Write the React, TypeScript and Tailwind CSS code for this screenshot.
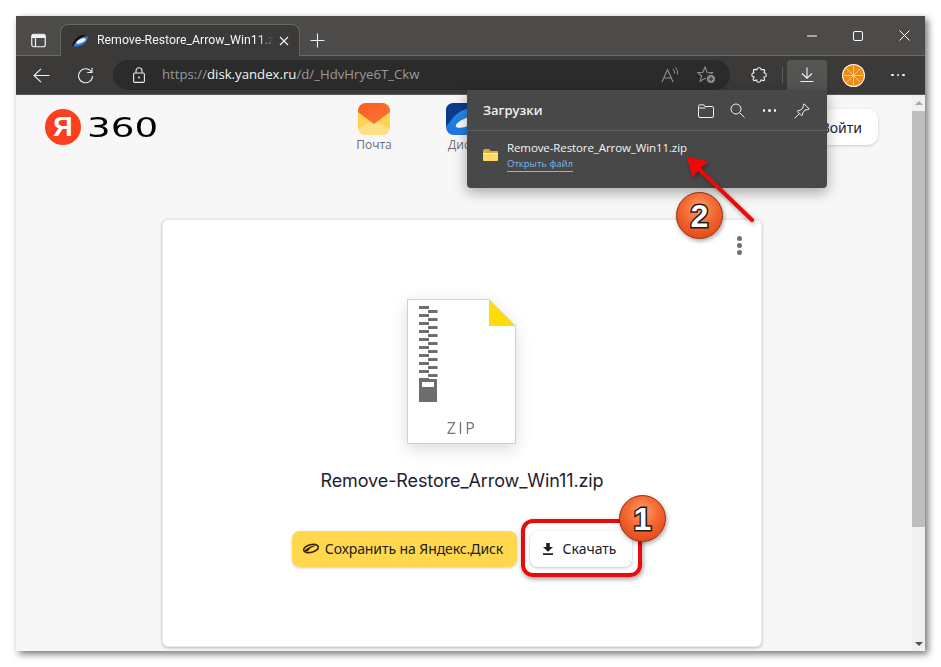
import React from "react";

const Ico = ({ w = 16, h = 16, vb, children, className = "" }: { w?: number; h?: number; vb?: string; children: React.ReactNode; className?: string }) => (
  <svg width={w} height={h} viewBox={vb ?? `0 0 ${w} ${h}`} fill="none" stroke="currentColor" strokeWidth={1} className={className}>
    {children}
  </svg>
);

const DiskLogo = ({ size }: { size: number }) => (
  <svg width={size} height={size} viewBox="0 0 32 32">
    <defs>
      <linearGradient id="dg" x1="0" y1="1" x2="1" y2="0">
        <stop offset="0" stopColor="#1a6fe0" />
        <stop offset="1" stopColor="#2f9bf0" />
      </linearGradient>
    </defs>
    <rect width="32" height="32" rx="8" fill="url(#dg)" />
    <path d="M0 8 Q0 0 8 0 H24 Q30 0 32 5 Q14 3 3 20 Q0 24 0 22Z" fill="#0b3c8c" />
    <ellipse cx="21" cy="19" rx="12" ry="4" transform="rotate(-22 21 19)" fill="#fff" />
  </svg>
);

const TabLogo = () => (
  <svg width="16" height="12" viewBox="0 0 16 12">
    <path d="M0 11 Q2 3 10 0 L14 0.5 Q6 2.5 3 10Z" fill="#0d0d12" />
    <path d="M1.5 11.5 Q3 6 9 3 Q14 1 16 1.5 Q15.5 7 10 10 Q5 12 1.5 11.5Z" fill="#2a80ea" />
    <ellipse cx="9" cy="6" rx="5" ry="1.9" transform="rotate(-25 9 6)" fill="#eef5ff" />
  </svg>
);

const MailLogo = () => (
  <svg width="32" height="32" viewBox="0 0 32 32">
    <defs>
      <linearGradient id="mt" x1="0" y1="0" x2="1" y2="1">
        <stop offset="0" stopColor="#ff5a1f" />
        <stop offset="1" stopColor="#f8773a" />
      </linearGradient>
    </defs>
    <clipPath id="mc"><rect width="32" height="32" rx="8" /></clipPath>
    <g clipPath="url(#mc)">
      <rect width="32" height="32" fill="#ffd34d" />
      <path d="M0 32 L16 18 L32 32Z M0 32 V26 L16 16 L32 26 V32Z" fill="#ffe082" />
      <path d="M0 0 H32 V9 L16 21 L0 9Z" fill="url(#mt)" />
    </g>
  </svg>
);

const SaveLogo = () => (
  <svg width="16" height="11" viewBox="0 0 16 11">
    <ellipse cx="8" cy="5.5" rx="7.5" ry="3.8" transform="rotate(-14 8 5.5)" fill="none" stroke="#3a2400" strokeWidth="1.6" />
    <path d="M1 9 Q4 3 13 2.5 Q8 4 5 8Z" fill="#3a2400" />
  </svg>
);

const FileIcon = () => {
  const rows = Array.from({ length: 19 }, (_, i) => i);
  return (
    <svg width="110" height="146" viewBox="0 0 110 146" className="drop-shadow-[0_5px_8px_rgba(0,0,0,0.14)]">
      <path d="M0.5 0.5 H82 L108.5 27 V144.5 H0.5Z" fill="#fff" stroke="#cfcfcf" />
      <path d="M82 0.5 L108.5 27 H82Z" fill="#ffdb0e" />
      {rows.map((i) => (
        <rect key={i} x={i % 2 ? 21 : 12} y={7 + i * 4} width={i % 2 ? 9.5 : 10} height={3} fill="#6e6e6e" />
      ))}
      <rect x="12" y="80" width="18" height="23" fill="#6e6e6e" />
      <rect x="15" y="83" width="12" height="5" fill="#fff" />
      <text x="55" y="135" textAnchor="middle" fontFamily="'Open Sans', sans-serif" fontSize="16" letterSpacing="2.4" fill="#767676">ZIP</text>
    </svg>
  );
};

const Badge = ({ n, className }: { n: string; className: string }) => (
  <div className={`absolute w-[47px] h-[47px] rounded-full border border-[#8c2a10] flex items-center justify-center bg-[radial-gradient(circle_at_50%_35%,#ffa06a_0%,#f4662f_45%,#d93c10_100%)] shadow-[1px_2px_4px_rgba(0,0,0,0.35)] ${className}`}>
    <span className="font-['Liberation_Sans',sans-serif] font-bold text-[32px] leading-none text-white [-webkit-text-stroke:3px_#1a1a1a] [paint-order:stroke_fill]">{n}</span>
  </div>
);

export default function App() {
  return (
    <div className="relative w-[941px] h-[667px] overflow-hidden bg-white pl-4 pt-4 font-['Open_Sans',sans-serif]">
      <div className="relative w-[909px] h-[635px] flex flex-col shadow-[3px_3px_7px_rgba(0,0,0,0.55)] bg-[#f7f7f7]">
        {/* title bar */}
        <div className="h-[40px] shrink-0 bg-[#4c4b49] border-b border-[#6a6a68] flex items-end text-white">
          <div className="w-[44px] h-[39px] pt-[9px] flex items-center justify-center">
            <Ico w={15} h={15} className="text-[#f2f2f2]">
              <rect x="0.75" y="1.25" width="13.5" height="12.5" rx="2" strokeWidth="1.2" />
              <path d="M0.75 4.5 H14.25 M4.5 4.5 V13.5" strokeWidth="1.2" />
              <path d="M1 1.5 H14 V4.5 H1Z" fill="currentColor" stroke="none" />
            </Ico>
          </div>
          <div className="relative -mb-px w-[240px] h-[32px] bg-[#3b3a39] border border-b-0 border-[#666664] rounded-t-lg flex items-center pl-[11px]">
            <TabLogo />
            <span className="ml-[9px] w-[176px] overflow-hidden whitespace-nowrap font-['Roboto',sans-serif] text-[12.3px] text-[#f5f5f5] [mask-image:linear-gradient(90deg,#000_92%,transparent)]">Remove-Restore_Arrow_Win11.zip</span>
            <Ico w={10} h={10} className="ml-[6px] text-[#f0f0f0]">
              <path d="M1 1 L9 9 M9 1 L1 9" strokeWidth="1.2" />
            </Ico>
          </div>
          <div className="w-[34px] h-[39px] pt-[9px] flex items-center justify-center">
            <Ico w={15} h={15} className="text-[#f0f0f0]">
              <path d="M7.5 0.5 V14.5 M0.5 7.5 H14.5" strokeWidth="1.1" />
            </Ico>
          </div>
          <div className="ml-auto flex h-[39px]">
            <div className="w-[46px] flex items-center justify-center">
              <Ico w={10} h={2}><path d="M0 1 H10" /></Ico>
            </div>
            <div className="w-[46px] mr-[2px] flex items-center justify-center">
              <Ico w={10} h={10}><rect x="0.5" y="0.5" width="9" height="9" rx="1.5" /></Ico>
            </div>
            <div className="w-[42px] flex items-center justify-center">
              <Ico w={11} h={11}><path d="M0.5 0.5 L10.5 10.5 M10.5 0.5 L0.5 10.5" /></Ico>
            </div>
          </div>
        </div>

        {/* toolbar */}
        <div className="h-[39px] shrink-0 bg-[#3b3a39] border-b border-[#5a5a5a] flex items-center text-[#ededed]">
          <div className="w-[50px] flex justify-center pl-[1px]">
            <Ico w={17} h={15}><path d="M16.5 7.5 H1 M8 0.8 L1 7.5 L8 14.2" strokeWidth="1.1" /></Ico>
          </div>
          <div className="w-[38px] flex justify-center">
            <Ico w={17} h={17}>
              <path d="M14.8 5.5 A7 7 0 1 0 15.6 9" strokeWidth="1.1" />
              <path d="M10.2 5.5 H15 V0.8" strokeWidth="1.1" />
            </Ico>
          </div>
          <div className="ml-[9px] w-[617px] h-[30px] rounded-full bg-[#2b2b2b] flex items-center pl-[20px] pr-[14px] -mt-px">
            <Ico w={12} h={16} className="text-[#e8e8e8] shrink-0">
              <rect x="0.6" y="6" width="10.8" height="9.4" rx="1.2" strokeWidth="1.1" />
              <path d="M3 6 V3.7 A3 3 0 0 1 9 3.7 V6" strokeWidth="1.1" />
              <circle cx="6" cy="10.6" r="1" fill="currentColor" stroke="none" />
            </Ico>
            <span className="ml-[17px] text-[13.2px] text-[#9a9a9a] whitespace-nowrap">
              https://<span className="text-[#f2f2f2]">disk.yandex.ru</span>/d/_HdvHrye6T_Ckw
            </span>
            <div className="ml-auto flex items-center gap-[17px] text-[#8f8f8f]">
              <Ico w={19} h={16}>
                <path d="M1 15 L6.5 2.5 L12 15 M3 11 H10" strokeWidth="1.1" />
                <path d="M12 2 Q14 4 13.6 6.5 M14.5 0.5 Q17.5 3.5 16.5 7.5" strokeWidth="1" />
              </Ico>
              <Ico w={19} h={18}>
                <path d="M8 1 L10 6.2 L15.5 6.5 L11.2 10 L12.4 15 L8 12.3 L3.2 15.3 L4.6 10 L0.6 6.6 L6 6.2Z" strokeWidth="1.1" />
                <circle cx="14" cy="13" r="4.6" fill="#8f8f8f" stroke="#2b2b2b" />
                <path d="M14 10.8 V15.2 M11.8 13 H16.2" stroke="#2b2b2b" strokeWidth="1.1" />
              </Ico>
            </div>
          </div>
          <div className="w-[29px] ml-[14px] -mr-[5px] flex justify-center">
            <Ico w={16} h={16} className="text-[#f0f0f0]">
              <path d="M5.8 2.6 Q6 0.8 8 0.8 Q10 0.8 10.2 2.6 L12.8 2.6 Q13.8 2.8 13.6 4 L13 5.8 Q15.4 6 15.2 8.2 Q15 10.2 13 10 L13.6 12.6 Q13.6 13.6 12.4 13.6 L10 13 Q9.6 15.4 7.6 15.2 Q5.6 15 5.8 13 L3.2 13.6 Q2.2 13.6 2.2 12.4 L3 10 Q0.8 9.8 0.8 7.8 Q1 5.8 3 5.8 L2.4 3.6 Q2.4 2.6 3.6 2.4Z" strokeWidth="1.1" />
            </Ico>
          </div>
          <div className="w-px h-[16px] bg-[#5f5f5f] ml-[14px]" />
          <div className="ml-[4px] w-[40px] h-[30px] rounded-t-[3px] bg-[#545453] flex items-center justify-center -mt-px">
            <Ico w={14} h={15} className="text-[#f2f2f2]">
              <path d="M7 0.5 V11 M2 6.5 L7 11.2 L12 6.5 M0.5 14.5 H13.5" strokeWidth="1.1" />
            </Ico>
          </div>
          <div className="ml-[15px] w-[23px] h-[23px] rounded-full bg-white flex items-center justify-center">
            <svg width="21" height="21" viewBox="0 0 21 21">
              <circle cx="10.5" cy="10.5" r="10.5" fill="#f08c14" />
              <g stroke="#ffd080" strokeWidth="0.9">
                <path d="M10.5 1 V20 M1 10.5 H20 M3.8 3.8 L17.2 17.2 M17.2 3.8 L3.8 17.2" />
              </g>
              <circle cx="10.5" cy="10.5" r="1.6" fill="#ffd080" />
            </svg>
          </div>
          <div className="ml-[26px] flex gap-[3px]">
            <span className="w-[2.5px] h-[2.5px] bg-[#f2f2f2] rounded-full" />
            <span className="w-[2.5px] h-[2.5px] bg-[#f2f2f2] rounded-full" />
            <span className="w-[2.5px] h-[2.5px] bg-[#f2f2f2] rounded-full" />
          </div>
        </div>

        {/* page */}
        <div className="relative flex-1 min-h-0 flex overflow-hidden">
          <div className="flex-1 min-w-0 flex flex-col">
            <header className="relative h-[124px] shrink-0 flex items-start pt-[14px] pl-[29px]">
              <div className="flex items-center h-[36px]">
                <div className="w-[36px] h-[36px] rounded-full bg-[#fc3f1d] flex items-center justify-center">
                  <span className="font-['Liberation_Sans',sans-serif] font-bold text-[27px] leading-none text-white">Я</span>
                </div>
                <span className="ml-[6px] w-[70px] font-['DejaVu_Sans',sans-serif] text-[27px] leading-none text-black origin-left scale-x-[1.38] inline-block">360</span>
              </div>
              <div className="ml-[202px] flex gap-[56px] -mt-[6px] -translate-x-px text-[12px] text-[#6b6b78]">
                <div className="flex flex-col items-center gap-[1px] w-[32px]">
                  <MailLogo />
                  <span className="leading-[18px]">Почта</span>
                </div>
                <div className="flex flex-col items-center gap-[1px] w-[32px]">
                  <DiskLogo size={32} />
                  <span className="leading-[18px]">Диск</span>
                </div>
              </div>
              <div className="ml-auto mr-[34px] h-[36px] w-[120px] rounded-[10px] bg-white shadow-[0_1px_3px_rgba(0,0,0,0.18)] flex items-center justify-end pr-[16px] text-[14px] text-[#1f2030] font-['Noto_Sans',sans-serif]">
                Войти
              </div>
            </header>
            <main className="relative ml-[146px] w-[600px] h-[428px] shrink-0 bg-white rounded-[6px] border border-[#e9e9e9] shadow-[0_1px_3px_rgba(0,0,0,0.25)] flex flex-col items-center pt-[79px]">
              <div className="absolute top-[16px] right-[19px] flex flex-col gap-[2px]">
                <span className="w-[5px] h-[5px] rounded-full bg-[#707070]" />
                <span className="w-[5px] h-[5px] rounded-full bg-[#707070]" />
                <span className="w-[5px] h-[5px] rounded-full bg-[#707070]" />
              </div>
              <FileIcon />
              <div className="mt-[24px] text-[18px] leading-[24px] text-[#1f2030] font-['Inter',sans-serif] tracking-[-0.1px]">Remove-Restore_Arrow_Win11.zip</div>
              <div className="mt-[38px] flex gap-[13px] font-['Noto_Sans',sans-serif] text-[14px] text-[#21201f]">
                <button className="h-[36px] w-[225px] pr-[3px] pb-[1px] rounded-[8px] bg-[#ffd84d] shadow-[0_1px_3px_rgba(0,0,0,0.2)] flex items-center justify-center gap-[6px]">
                  <SaveLogo />
                  <span className="tracking-[-0.08px]">Сохранить на Яндекс.Диск</span>
                </button>
                <button className="h-[36px] w-[102px] pr-[4px] pb-[1px] rounded-[8px] bg-white shadow-[0_1px_3px_rgba(0,0,0,0.25)] flex items-center justify-center gap-[9px]">
                  <svg width="12" height="12" viewBox="0 0 12 12">
                    <path d="M4.2 0 H7.8 V4 H11 L6 8.8 L1 4 H4.2Z M1 10.3 H11 V12 H1Z" fill="#21201f" />
                  </svg>
                  <span>Скачать</span>
                </button>
              </div>
            </main>
          </div>
          {/* scrollbar */}
          <div className="w-[13px] shrink-0 bg-[#f0f0f0] flex flex-col items-center">
            <div className="h-[16px] flex items-center justify-center">
              <div className="w-0 h-0 border-x-[4px] border-x-transparent border-b-[4px] border-b-[#a8a8a8]" />
            </div>
            <div className="w-full h-[416px] bg-[#bebebe]" />
            <div className="mt-auto h-[14px] flex items-center justify-center">
              <div className="w-0 h-0 border-x-[4px] border-x-transparent border-t-[4px] border-t-[#505050]" />
            </div>
          </div>
        </div>
      </div>

      {/* downloads flyout */}
      <section className="absolute left-[467px] top-[90px] w-[360px] h-[98px] bg-[#484848] rounded-b-[4px] shadow-[0_4px_14px_rgba(0,0,0,0.35)] text-white">
        <div className="h-[41px] pt-[1px] border-b border-[#5e5e5e] flex items-center pl-[16px] pr-[17px]">
          <span className="text-[13px] font-semibold text-[#f0f0f0]">Загрузки</span>
          <div className="ml-auto flex items-center gap-[16.5px] text-[#f0f0f0]">
            <Ico w={16} h={14}>
              <path d="M0.5 3 V12 Q0.5 13.5 2 13.5 H14 Q15.5 13.5 15.5 12 V3.5 Q15.5 2.5 14 2.5 H7 L5.8 0.8 H2 Q0.5 0.8 0.5 2.5 V4 H7.5" />
            </Ico>
            <Ico w={15} h={15}>
              <circle cx="6" cy="6" r="5" />
              <path d="M9.6 9.6 L14.5 14.5" />
            </Ico>
            <div className="w-[16px] flex gap-[3px] justify-center">
              <span className="w-[2.5px] h-[2.5px] bg-[#f2f2f2] rounded-full" />
              <span className="w-[2.5px] h-[2.5px] bg-[#f2f2f2] rounded-full" />
              <span className="w-[2.5px] h-[2.5px] bg-[#f2f2f2] rounded-full" />
            </div>
            <Ico w={16} h={16}>
              <path d="M10 0.8 L15.2 6 L13.8 6.6 L11 7 L8.6 10 L8.4 12.2 L7.4 12.6 L3.4 8.6 L3.8 7.6 L6 7.4 L9 5 L9.4 2.2Z M5.4 10.6 L0.6 15.4" />
            </Ico>
          </div>
        </div>
        <div className="flex items-start pl-[16px] pt-[9px]">
          <svg width="15" height="12" viewBox="0 0 15 12" className="mt-[9px]">
            <path d="M0 2 Q0 0 2 0 H6 L7.5 2 H15 V5 H0Z" fill="#d9a93a" />
            <rect x="0" y="4" width="15" height="8" rx="1" fill="#ffd767" />
            <rect x="0" y="4" width="15" height="1" fill="#f5f0d8" />
          </svg>
          <div className="ml-[9px] flex flex-col items-start">
            <span className="text-[11.5px] leading-[16px] font-medium text-[#f4f4f4] tracking-[-0.1px]">Remove-Restore_Arrow_Win11.zip</span>
            <span className="text-[9.5px] leading-[14px] mt-[1px] text-[#7cb8e8] border-b border-[#7cb8e8]">Открыть файл</span>
          </div>
        </div>
      </section>

      {/* annotations */}
      <div className="absolute left-[521px] top-[519px] w-[121px] h-[58px] rounded-[12px] border-[4px] border-[#ea0a0a] shadow-[1px_2px_5px_rgba(0,0,0,0.4)]" />
      <svg className="absolute left-[680px] top-[150px] drop-shadow-[1px_2px_2px_rgba(0,0,0,0.35)]" width="80" height="80" viewBox="0 0 80 80">
        <path d="M72 70 L18 18" stroke="#ea0a0a" strokeWidth="4" strokeLinecap="round" />
        <path d="M8 8 L27 12 L20 17 L13 26Z" fill="#ea0a0a" stroke="#ea0a0a" strokeWidth="2" strokeLinejoin="round" />
      </svg>
      <Badge n="1" className="left-[619px] top-[495px]" />
      <Badge n="2" className="left-[676px] top-[192px]" />
    </div>
  );
}
